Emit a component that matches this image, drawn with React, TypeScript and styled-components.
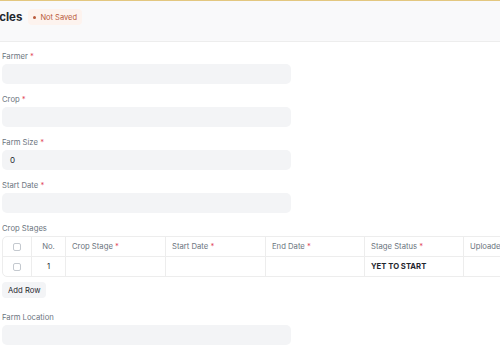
import styled, { createGlobalStyle } from "styled-components";

const GlobalStyle = createGlobalStyle`
  html, body {
    margin: 0;
    padding: 0;
    background: #ffffff;
    overflow: hidden;
  }
  body {
    font-family: Inter, "Noto Sans", sans-serif;
    color: #1f272e;
  }
`;

const Page = styled.div`
  width: 500px;
  height: 350px;
  overflow: hidden;
  display: flex;
  flex-direction: column;
`;

const Header = styled.header`
  height: 42px;
  flex-shrink: 0;
  box-sizing: border-box;
  border-top: 1px solid #e3c77f;
  border-bottom: 1px solid #ededed;
  background: #f9f9fa;
  display: flex;
  align-items: center;
  gap: 6px;
  padding-bottom: 8px;
  overflow: hidden;
`;

const Title = styled.h1`
  margin: 0 0 0 -46px;
  font-size: 11.5px;
  font-weight: 700;
  white-space: nowrap;
  color: #1f272e;
`;

const Badge = styled.span`
  display: inline-flex;
  align-items: center;
  gap: 4px;
  height: 16px;
  padding: 0 5px;
  border-radius: 4px;
  background: #fdf3ee;
  color: #b9593a;
  font-size: 7.5px;

  &::before {
    content: "";
    width: 3px;
    height: 3px;
    border-radius: 50%;
    background: currentColor;
  }
`;

const Form = styled.main`
  padding: 5px 0 0 2px;
  display: flex;
  flex-direction: column;
`;

const Field = styled.div`
  display: flex;
  flex-direction: column;
  margin-bottom: 6px;
`;

const Label = styled.label<{ $required?: boolean }>`
  padding-top: 3px;
  font-size: 7.7px;
  line-height: 14px;
  color: #6c7580;

  ${({ $required }) =>
    $required &&
    `&::after {
      content: " *";
      color: #e2475a;
    }`}
`;

const Input = styled.div`
  width: 289px;
  height: 20px;
  border-radius: 5px;
  background: #f3f4f6;
  font-size: 8px;
  line-height: 20px;
  padding: 0 8px;
  box-sizing: border-box;
  color: #1f272e;
`;

const Table = styled.div`
  width: 560px;
  border: 1px solid #ededed;
  border-radius: 5px;
  overflow: hidden;
`;

const Row = styled.div<{ $head?: boolean }>`
  display: grid;
  grid-template-columns: 28px 34px 100px 100px 99px 99px 100px;
  height: 19px;
  font-size: 7.7px;
  color: ${({ $head }) => ($head ? "#6b747e" : "#1f272e")};

  & + & {
    border-top: 1px solid #ededed;
  }
`;

const Cell = styled.div<{ $center?: boolean; $required?: boolean; $bold?: boolean }>`
  display: flex;
  align-items: center;
  justify-content: ${({ $center }) => ($center ? "center" : "flex-start")};
  padding: ${({ $center }) => ($center ? "0" : "0 6px")};
  font-weight: ${({ $bold }) => ($bold ? 700 : 400)};
  white-space: nowrap;
  overflow: hidden;

  & + & {
    border-left: 1px solid #ededed;
  }

  ${({ $required }) =>
    $required &&
    `&::after {
      content: "\\00a0*";
      color: #e2475a;
    }`}
`;

const Check = styled.span`
  width: 6px;
  height: 6px;
  border: 1px solid #c4c9cf;
  border-radius: 2px;
  background: #fff;
`;

const AddRow = styled.button`
  align-self: flex-start;
  margin-top: 5px;
  margin-bottom: 10px;
  height: 16px;
  padding: 0 6px;
  border: none;
  border-radius: 4px;
  background: #f3f4f6;
  font-family: inherit;
  font-size: 7.7px;
  color: #1f272e;
`;

const BottomLine = styled.div`
  margin-top: auto;
  height: 2px;
  background: #f7dcae;
  margin-bottom: 1px;
`;

const columns = [
  { title: "Crop Stage", required: true },
  { title: "Start Date", required: true },
  { title: "End Date", required: true },
  { title: "Stage Status", required: true },
  { title: "Uploaded Images", required: false },
];

const App = () => {
  return (
    <Page>
      <GlobalStyle />
      <Header>
        <Title>Crop Cycles</Title>
        <Badge>Not Saved</Badge>
      </Header>
      <Form>
        <Field>
          <Label $required>Farmer</Label>
          <Input />
        </Field>
        <Field>
          <Label $required>Crop</Label>
          <Input />
        </Field>
        <Field>
          <Label $required>Farm Size</Label>
          <Input>0</Input>
        </Field>
        <Field>
          <Label $required>Start Date</Label>
          <Input />
        </Field>
        <Label>Crop Stages</Label>
        <Table>
          <Row $head>
            <Cell $center>
              <Check />
            </Cell>
            <Cell $center>No.</Cell>
            {columns.map((c) => (
              <Cell key={c.title} $required={c.required}>
                {c.title}
              </Cell>
            ))}
          </Row>
          <Row>
            <Cell $center>
              <Check />
            </Cell>
            <Cell $center>1</Cell>
            <Cell />
            <Cell />
            <Cell />
            <Cell $bold>YET TO START</Cell>
            <Cell />
          </Row>
        </Table>
        <AddRow>Add Row</AddRow>
        <Field>
          <Label>Farm Location</Label>
          <Input />
        </Field>
      </Form>
      <BottomLine />
    </Page>
  );
};

export default App;
